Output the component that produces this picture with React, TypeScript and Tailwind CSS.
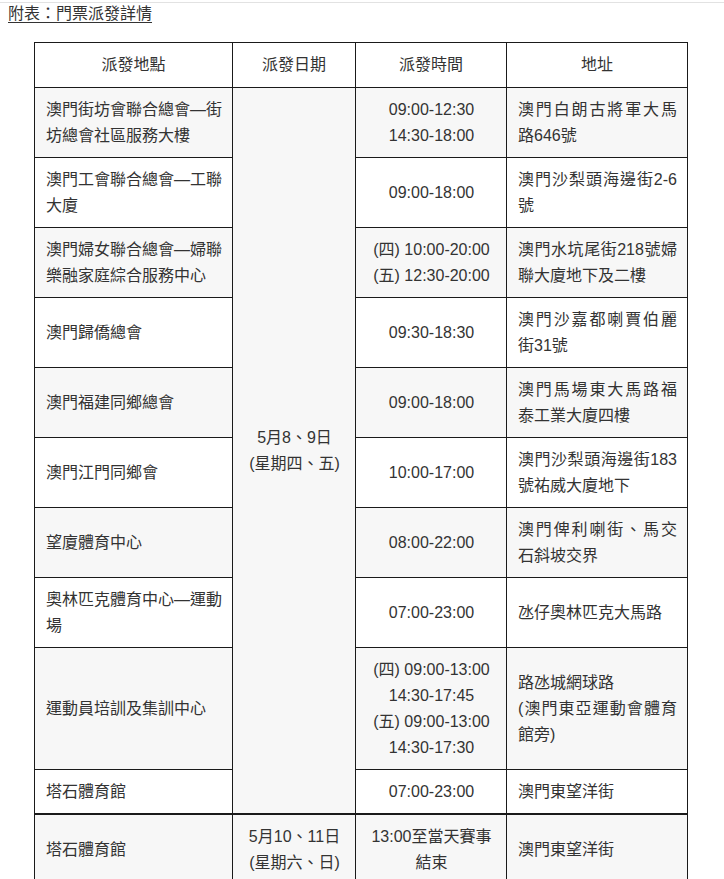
import React from "react";

type Row = {
  place: string;
  time: React.ReactNode;
  addr: React.ReactNode;
};

const rows: Row[] = [
  {
    place: "澳門街坊會聯合總會—街坊總會社區服務大樓",
    time: (
      <>
        09:00-12:30
        <br />
        14:30-18:00
      </>
    ),
    addr: "澳門白朗古將軍大馬路646號",
  },
  { place: "澳門工會聯合總會—工聯大廈", time: "09:00-18:00", addr: "澳門沙梨頭海邊街2-6號" },
  {
    place: "澳門婦女聯合總會—婦聯樂融家庭綜合服務中心",
    time: (
      <>
        (四) 10:00-20:00
        <br />
        (五) 12:30-20:00
      </>
    ),
    addr: "澳門水坑尾街218號婦聯大廈地下及二樓",
  },
  { place: "澳門歸僑總會", time: "09:30-18:30", addr: "澳門沙嘉都喇賈伯麗街31號" },
  { place: "澳門福建同鄉總會", time: "09:00-18:00", addr: "澳門馬場東大馬路福泰工業大廈四樓" },
  { place: "澳門江門同鄉會", time: "10:00-17:00", addr: "澳門沙梨頭海邊街183號祐威大廈地下" },
  { place: "望廈體育中心", time: "08:00-22:00", addr: "澳門俾利喇街、馬交石斜坡交界" },
  { place: "奧林匹克體育中心—運動場", time: "07:00-23:00", addr: "氹仔奧林匹克大馬路" },
  {
    place: "運動員培訓及集訓中心",
    time: (
      <>
        (四) 09:00-13:00
        <br />
        14:30-17:45
        <br />
        (五) 09:00-13:00
        <br />
        14:30-17:30
      </>
    ),
    addr: (
      <>
        路氹城網球路
        <br />
        (澳門東亞運動會體育館旁)
      </>
    ),
  },
  { place: "塔石體育館", time: "07:00-23:00", addr: "澳門東望洋街" },
];

const cell = "border border-[#1a1a1a] pl-[11px] pr-[10px] pt-[9px] pb-[8px] align-middle leading-[26px]";
const head = "border border-[#1a1a1a] px-[10px] py-[9px] align-middle leading-[26px] text-center font-normal";

export default function App() {
  return (
    <div
      className="bg-white min-h-[879px] text-[16px] text-[#333]"
      style={{ fontFamily: '"Liberation Sans", "Noto Sans CJK TC", sans-serif' }}
    >
      <div className="mt-[2px] h-px bg-[#e2e2e2]" />
      <div className="pl-[8px] pt-[1px] leading-[20px]">
        <span className="underline underline-offset-[3px]">附表：門票派發詳情</span>
      </div>
      <table className="ml-[34px] mt-[18px] w-[653px] table-fixed border-collapse">
        <colgroup>
          <col className="w-[198px]" />
          <col className="w-[123px]" />
          <col className="w-[151px]" />
          <col className="w-[181px]" />
        </colgroup>
        <thead>
          <tr className="bg-white">
            <th className={head}>派發地點</th>
            <th className={head}>派發日期</th>
            <th className={head}>派發時間</th>
            <th className={head}>地址</th>
          </tr>
        </thead>
        <tbody>
          {rows.map((r, i) => (
            <tr key={i} className={i % 2 === 0 ? "bg-[#f7f7f7]" : "bg-white"}>
              <td className={`${cell} text-justify`}>{r.place}</td>
              {i === 0 && (
                <td rowSpan={10} className={`${cell} text-center bg-[#f7f7f7]`}>
                  5月8、9日
                  <br />
                  (星期四、五)
                </td>
              )}
              <td className={`${cell} text-center`}>{r.time}</td>
              <td className={`${cell} text-justify`}>{r.addr}</td>
            </tr>
          ))}
          <tr className="bg-[#f7f7f7]">
            <td className={`${cell} border-t-2 text-justify`}>塔石體育館</td>
            <td className={`${cell} border-t-2 text-center`}>
              5月10、11日
              <br />
              (星期六、日)
            </td>
            <td className={`${cell} border-t-2 text-center`}>
              13:00至當天賽事
              <br />
              結束
            </td>
            <td className={`${cell} border-t-2 text-justify`}>澳門東望洋街</td>
          </tr>
        </tbody>
      </table>
    </div>
  );
}
